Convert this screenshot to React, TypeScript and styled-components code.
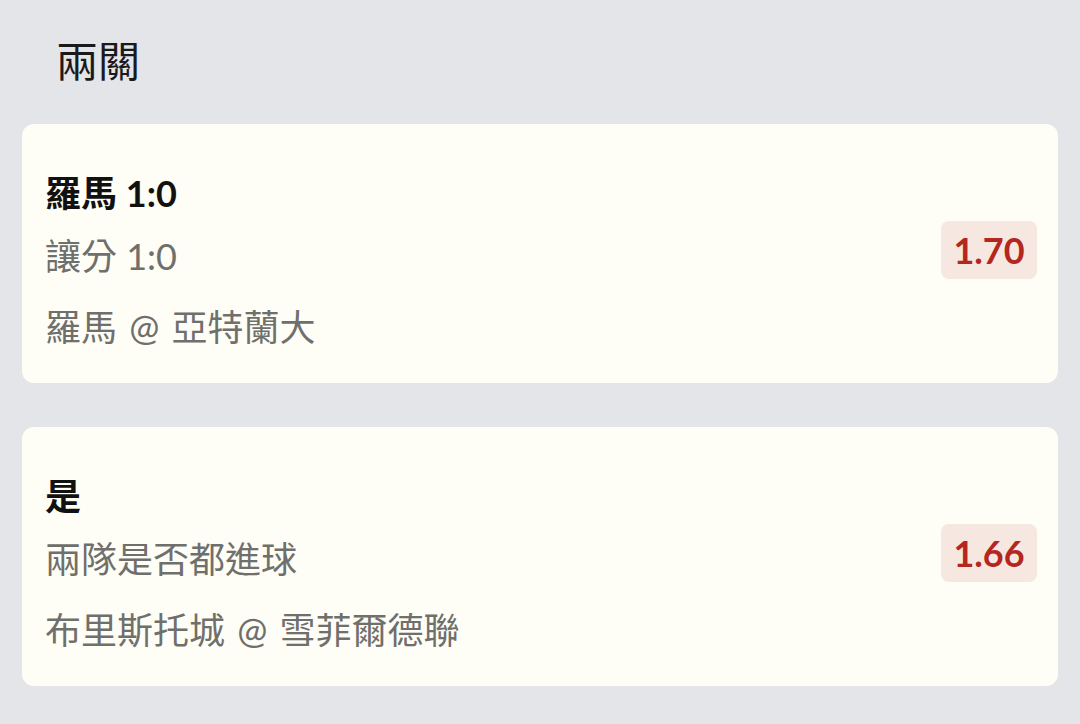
import React from 'react'
import styled, { createGlobalStyle } from 'styled-components'

const GlobalStyle = createGlobalStyle`
  html, body {
    margin: 0;
    padding: 0;
    background: #e4e5e8;
  }
  body {
    font-family: Lato, "Noto Sans CJK TC", sans-serif;
  }
`

const Page = styled.div`
  min-height: 724px;
  box-sizing: border-box;
  padding: 37px 22px 30px;
  background: #e4e5e8;
`

const Heading = styled.h1`
  margin: 0 0 39px 34px;
  font-size: 42px;
  line-height: 48px;
  font-weight: 400;
  color: #1a1a1a;
`

const List = styled.div`
  display: flex;
  flex-direction: column;
  gap: 44px;
`

const Card = styled.div`
  display: flex;
  align-items: center;
  justify-content: space-between;
  height: 259px;
  box-sizing: border-box;
  padding: 45px 21px 32px 23px;
  background: #fefdf6;
  border-radius: 12px;
`

const Info = styled.div`
  display: flex;
  flex-direction: column;
  align-self: flex-start;
`

const Title = styled.div`
  font-size: 36px;
  line-height: 48px;
  font-weight: 700;
  color: #111;
`

const Market = styled.div`
  margin-top: 15px;
  font-size: 36px;
  line-height: 48px;
  color: #6f6f6c;
`

const Match = styled.div`
  margin-top: 23px;
  font-size: 36px;
  line-height: 48px;
  color: #6f6f6c;
  word-spacing: 3px;
`

const Odds = styled.div`
  display: flex;
  align-items: center;
  justify-content: center;
  width: 96px;
  height: 58px;
  margin-bottom: 20px;
  border-radius: 8px;
  background: #f7e7e1;
  color: #b3271e;
  font-size: 36px;
  font-weight: 700;
`

const bets = [
  { title: '羅馬 1:0', market: '讓分 1:0', match: '羅馬 @ 亞特蘭大', odds: '1.70' },
  { title: '是', market: '兩隊是否都進球', match: '布里斯托城 @ 雪菲爾德聯', odds: '1.66' },
]

export default function App() {
  return (
    <Page>
      <GlobalStyle />
      <Heading>兩關</Heading>
      <List>
        {bets.map((b) => (
          <Card key={b.match}>
            <Info>
              <Title>{b.title}</Title>
              <Market>{b.market}</Market>
              <Match>{b.match}</Match>
            </Info>
            <Odds>{b.odds}</Odds>
          </Card>
        ))}
      </List>
    </Page>
  )
}
